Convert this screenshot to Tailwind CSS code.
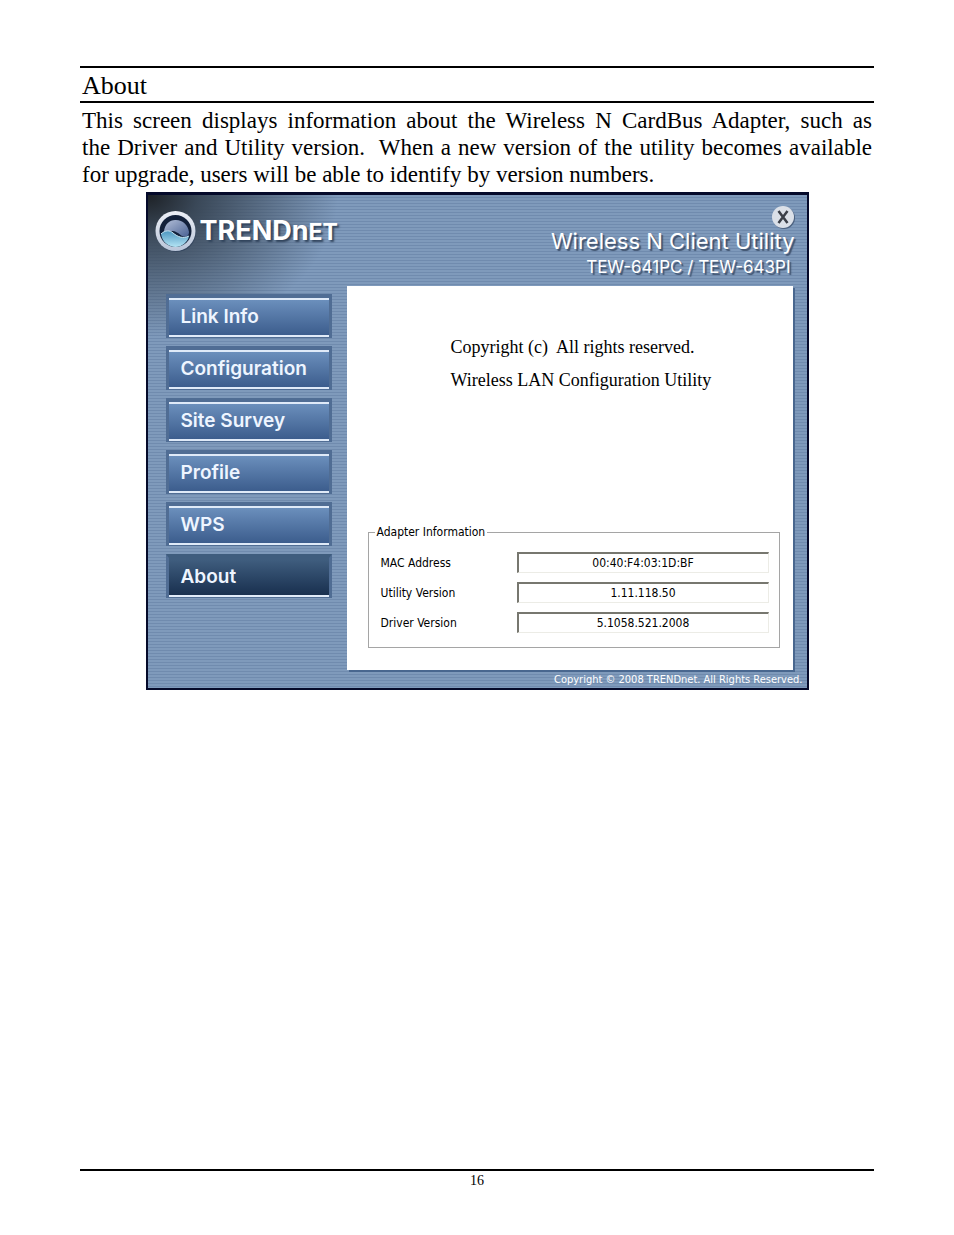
<!DOCTYPE html>
<html lang="en">
<head>
    <meta charset="UTF-8">
    <meta name="viewport" content="width=device-width, initial-scale=1.0">
    <title>About</title>
    <script src="https://cdn.jsdelivr.net/npm/@tailwindcss/browser@4"></script>
</head>
<body class="flex flex-col min-h-screen px-20 bg-white text-black font-['Liberation_Serif',serif]">

    <main class="flex-1 pt-[66px]">
        <h1 class="border-y-2 border-black px-0.5 pt-0.5 text-[26px] leading-[31px]">About</h1>
        <p class="px-0.5 pt-1 text-[23px] leading-[27px] text-justify">This screen displays information about the Wireless N CardBus Adapter, such as the&nbsp;Driver and Utility version.&nbsp; When a new version of the utility becomes available for&nbsp;upgrade, users will be able to identify by version numbers.</p>

        <!-- Utility window -->
        <section class="mx-auto mt-1 w-full max-w-[663px] border-2 border-t-3 border-[#050a2a] bg-[#7b97b9] bg-[radial-gradient(ellipse_at_top_left,#1d2126_0px,#3a4858_50px,transparent_190px),repeating-linear-gradient(#7f9abb_0px,#7f9abb_2px,#708bae_2px,#708bae_3px)] font-[Inter,sans-serif] text-white">
            <header class="flex justify-between h-[91px] pl-1.5 pr-3">
                <div class="flex items-center gap-1 h-[72px] [text-shadow:2px_2px_2px_#30435b]">
                    <svg class="w-[42px] h-[42px]" viewBox="0 0 42 42" aria-hidden="true">
                        <defs>
                            <linearGradient id="ring" x1="0" y1="0" x2="0" y2="1"><stop offset="0" stop-color="#eceff6"/><stop offset="1" stop-color="#b9c5d9"/></linearGradient>
                            <linearGradient id="sky" x1="0" y1="0" x2="1" y2="1"><stop offset="0" stop-color="#b3bfd8"/><stop offset="1" stop-color="#4a6294"/></linearGradient>
                            <linearGradient id="sea" x1="0" y1="0" x2="0" y2="1"><stop offset="0" stop-color="#4c96c0"/><stop offset="1" stop-color="#b4e4f4"/></linearGradient>
                        </defs>
                        <circle cx="22.500" cy="22.500" r="19.500" fill="#35475f"/>
                        <circle cx="21.500" cy="21" r="20" fill="url(#ring)"/>
                        <circle cx="21.500" cy="21" r="16" fill="#12203a"/>
                        <path d="M10 21C11 14 16 9.500 22 10c7 0 12 5 13 12 0 4-3 6-7 4-4-3-6-5-11-5-3 0-5 1-7 2z" fill="url(#sky)"/>
                        <path d="M7 24c4-4 9-4 12-1 5 4 10 6 16 3-1 6-7 11-13.500 11S8 32 7 24z" fill="url(#sea)"/>
                        <path d="M7 24c4-4 9-4 12-1 5 4 10 6 16 3" fill="none" stroke="#c8e6f2"/>
                    </svg>
                    <span class="text-[27px] font-bold">TREN<span>D</span>n<span class="text-[23px]">ET</span></span>
                </div>
                <div class="flex flex-col items-end [text-shadow:2px_2px_1px_#40536e]">
                    <button type="button" aria-label="Close" class="mt-2.5 w-6 h-6">
                        <svg viewBox="0 0 24 24" aria-hidden="true">
                            <circle cx="13" cy="13" r="11" fill="#4c617f"/>
                            <circle cx="12" cy="12" r="11" fill="#dbe0e8"/>
                            <path d="M7.500 6l9 12M16.500 6l-9 12" stroke="#3b3f48" stroke-width="2.500"/>
                        </svg>
                    </button>
                    <h2 class="text-[22px] leading-6">Wireless N Client Utility</h2>
                    <p class="pr-1 text-[17px] leading-7">TEW-641PC / TEW-643PI</p>
                </div>
            </header>

            <div class="flex pl-[18px] pr-3.5">
                <nav class="flex flex-col gap-2 w-[181px] shrink-0 pt-2 pr-[15px] text-[19px] font-semibold text-[#eef5ff]">
                    <button type="button" class="h-11 border-3 border-t-4 border-b-1 border-[#506d94] text-left"><span class="block h-[39px] border-y-2 border-[#dfeaf8] bg-linear-to-b from-[#6b8fbc] to-[#3c5d8d] px-3 leading-[34px]">Link Info</span></button>
                    <button type="button" class="h-11 border-3 border-t-4 border-b-1 border-[#506d94] text-left"><span class="block h-[39px] border-y-2 border-[#dfeaf8] bg-linear-to-b from-[#6b8fbc] to-[#3c5d8d] px-3 leading-[34px]">Configuration</span></button>
                    <button type="button" class="h-11 border-3 border-t-4 border-b-1 border-[#506d94] text-left"><span class="block h-[39px] border-y-2 border-[#dfeaf8] bg-linear-to-b from-[#6b8fbc] to-[#3c5d8d] px-3 leading-[34px]">Site Survey</span></button>
                    <button type="button" class="h-11 border-3 border-t-4 border-b-1 border-[#506d94] text-left"><span class="block h-[39px] border-y-2 border-[#dfeaf8] bg-linear-to-b from-[#6b8fbc] to-[#3c5d8d] px-3 leading-[34px]">Profile</span></button>
                    <button type="button" class="h-11 border-3 border-t-4 border-b-1 border-[#506d94] text-left"><span class="block h-[39px] border-y-2 border-[#dfeaf8] bg-linear-to-b from-[#6b8fbc] to-[#3c5d8d] px-3 leading-[34px]">WPS</span></button>
                    <button type="button" aria-current="page" class="h-11 border-3 border-t-4 border-b-1 border-[#506d94] border-t-[#3f5d7e] text-left"><span class="block h-[39px] border-y-2 border-t-[#3f5d7e] border-b-[#dfeaf8] bg-linear-to-b from-[#3f5d7e] to-[#19304f] px-3 leading-[34px]">About</span></button>
                </nav>

                <div class="flex flex-col justify-between flex-1 h-[384px] px-[13px] pb-[22px] bg-white text-black shadow-[2px_2px_0_#49678f]">
                    <div class="pt-[45px] pl-[91px] text-[18px] leading-[33px] font-['Liberation_Serif',serif]">
                        <p>Copyright (c)&nbsp; All rights reserved.</p>
                        <p>Wireless LAN Configuration Utility</p>
                    </div>
                    <fieldset class="ml-2 border border-[#a5a5a5] px-2.5 pb-[14px] text-[12px] font-['DejaVu_Sans_Condensed','DejaVu_Sans',sans-serif]">
                        <legend class="-ml-1 px-0.5 leading-4">Adapter Information</legend>
                        <div class="flex flex-col gap-[9px] pt-3 pl-0.5">
                            <div class="flex items-center">
                                <label for="mac" class="w-[136px]">MAC Address</label>
                                <input id="mac" type="text" readonly value="00:40:F4:03:1D:BF" class="flex-1 min-w-0 h-[21px] border-t-2 border-l-2 border-r border-b border-t-[#77776f] border-l-[#77776f] border-r-[#ecece6] border-b-[#ecece6] text-center">
                            </div>
                            <div class="flex items-center">
                                <label for="utility" class="w-[136px]">Utility Version</label>
                                <input id="utility" type="text" readonly value="1.11.118.50" class="flex-1 min-w-0 h-[21px] border-t-2 border-l-2 border-r border-b border-t-[#77776f] border-l-[#77776f] border-r-[#ecece6] border-b-[#ecece6] text-center">
                            </div>
                            <div class="flex items-center">
                                <label for="driver" class="w-[136px]">Driver Version</label>
                                <input id="driver" type="text" readonly value="5.1058.521.2008" class="flex-1 min-w-0 h-[21px] border-t-2 border-l-2 border-r border-b border-t-[#77776f] border-l-[#77776f] border-r-[#ecece6] border-b-[#ecece6] text-center">
                            </div>
                        </div>
                    </fieldset>
                </div>
            </div>
            <p class="pt-0.5 pr-1 text-right text-[11px] leading-4 font-['DejaVu_Sans_Condensed','DejaVu_Sans',sans-serif]">Copyright © 2008 TRENDnet. All Rights Reserved.</p>
        </section>
    </main>

    <footer class="h-[66px] border-t-2 border-black text-center text-sm">16</footer>
</body>
</html>
